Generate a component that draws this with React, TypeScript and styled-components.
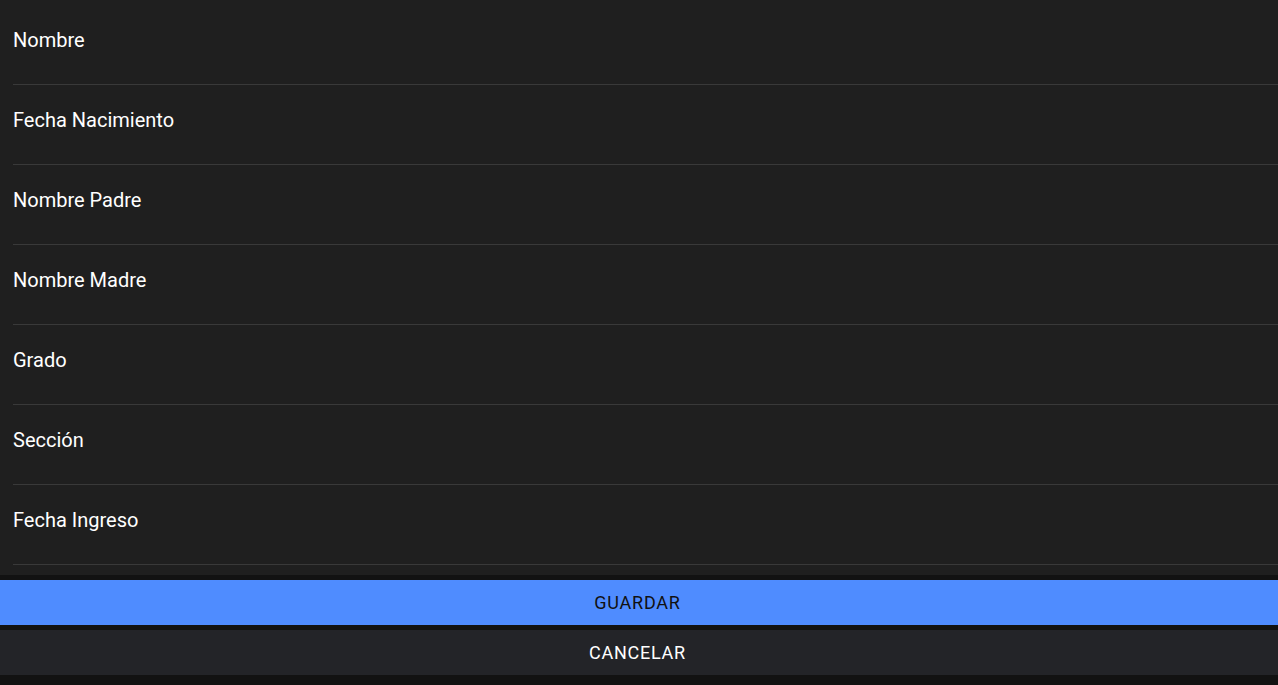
import React from 'react';
import { styled, createGlobalStyle } from 'styled-components';

const GlobalStyle = createGlobalStyle`
  html, body {
    margin: 0;
    padding: 0;
    background: #121212;
  }
  * { box-sizing: border-box; }
`;

const Page = styled.div`
  display: flex;
  flex-direction: column;
  height: 685px;
  font-family: Roboto, "Noto Sans", sans-serif;
  background: #121212;
`;

const FieldList = styled.div`
  flex: 1;
  overflow: hidden;
  background: #1f1f1f;
  padding-top: 5px;
`;

const FieldRow = styled.div`
  display: flex;
  align-items: flex-start;
  height: 80px;
  margin-left: 13px;
  padding-top: 25px;
  border-bottom: 1px solid #393939;
  color: #ffffff;
  font-size: 20px;
  line-height: 21px;
`;

const Footer = styled.div`
  display: flex;
  flex-direction: column;
  gap: 5px;
  padding: 5px 0 10px;
`;

const ActionButton = styled.button<{ $primary?: boolean }>`
  height: 45px;
  width: 100%;
  border: none;
  margin: 0;
  padding: 0 3px 0 0;
  font-family: Roboto, "Noto Sans", sans-serif;
  font-size: 18px;
  line-height: 20px;
  letter-spacing: 0.75px;
  text-transform: uppercase;
  background: ${p => (p.$primary ? '#4f8cff' : '#232428')};
  color: ${p => (p.$primary ? '#111111' : '#ffffff')};
  cursor: pointer;
`;

const fields = [
  'Nombre',
  'Fecha Nacimiento',
  'Nombre Padre',
  'Nombre Madre',
  'Grado',
  'Sección',
  'Fecha Ingreso',
];

export default function App() {
  return (
    <>
      <GlobalStyle />
      <Page>
        <FieldList>
          {fields.map(f => (
            <FieldRow key={f}>{f}</FieldRow>
          ))}
        </FieldList>
        <Footer>
          <ActionButton $primary>Guardar</ActionButton>
          <ActionButton>Cancelar</ActionButton>
        </Footer>
      </Page>
    </>
  );
}
